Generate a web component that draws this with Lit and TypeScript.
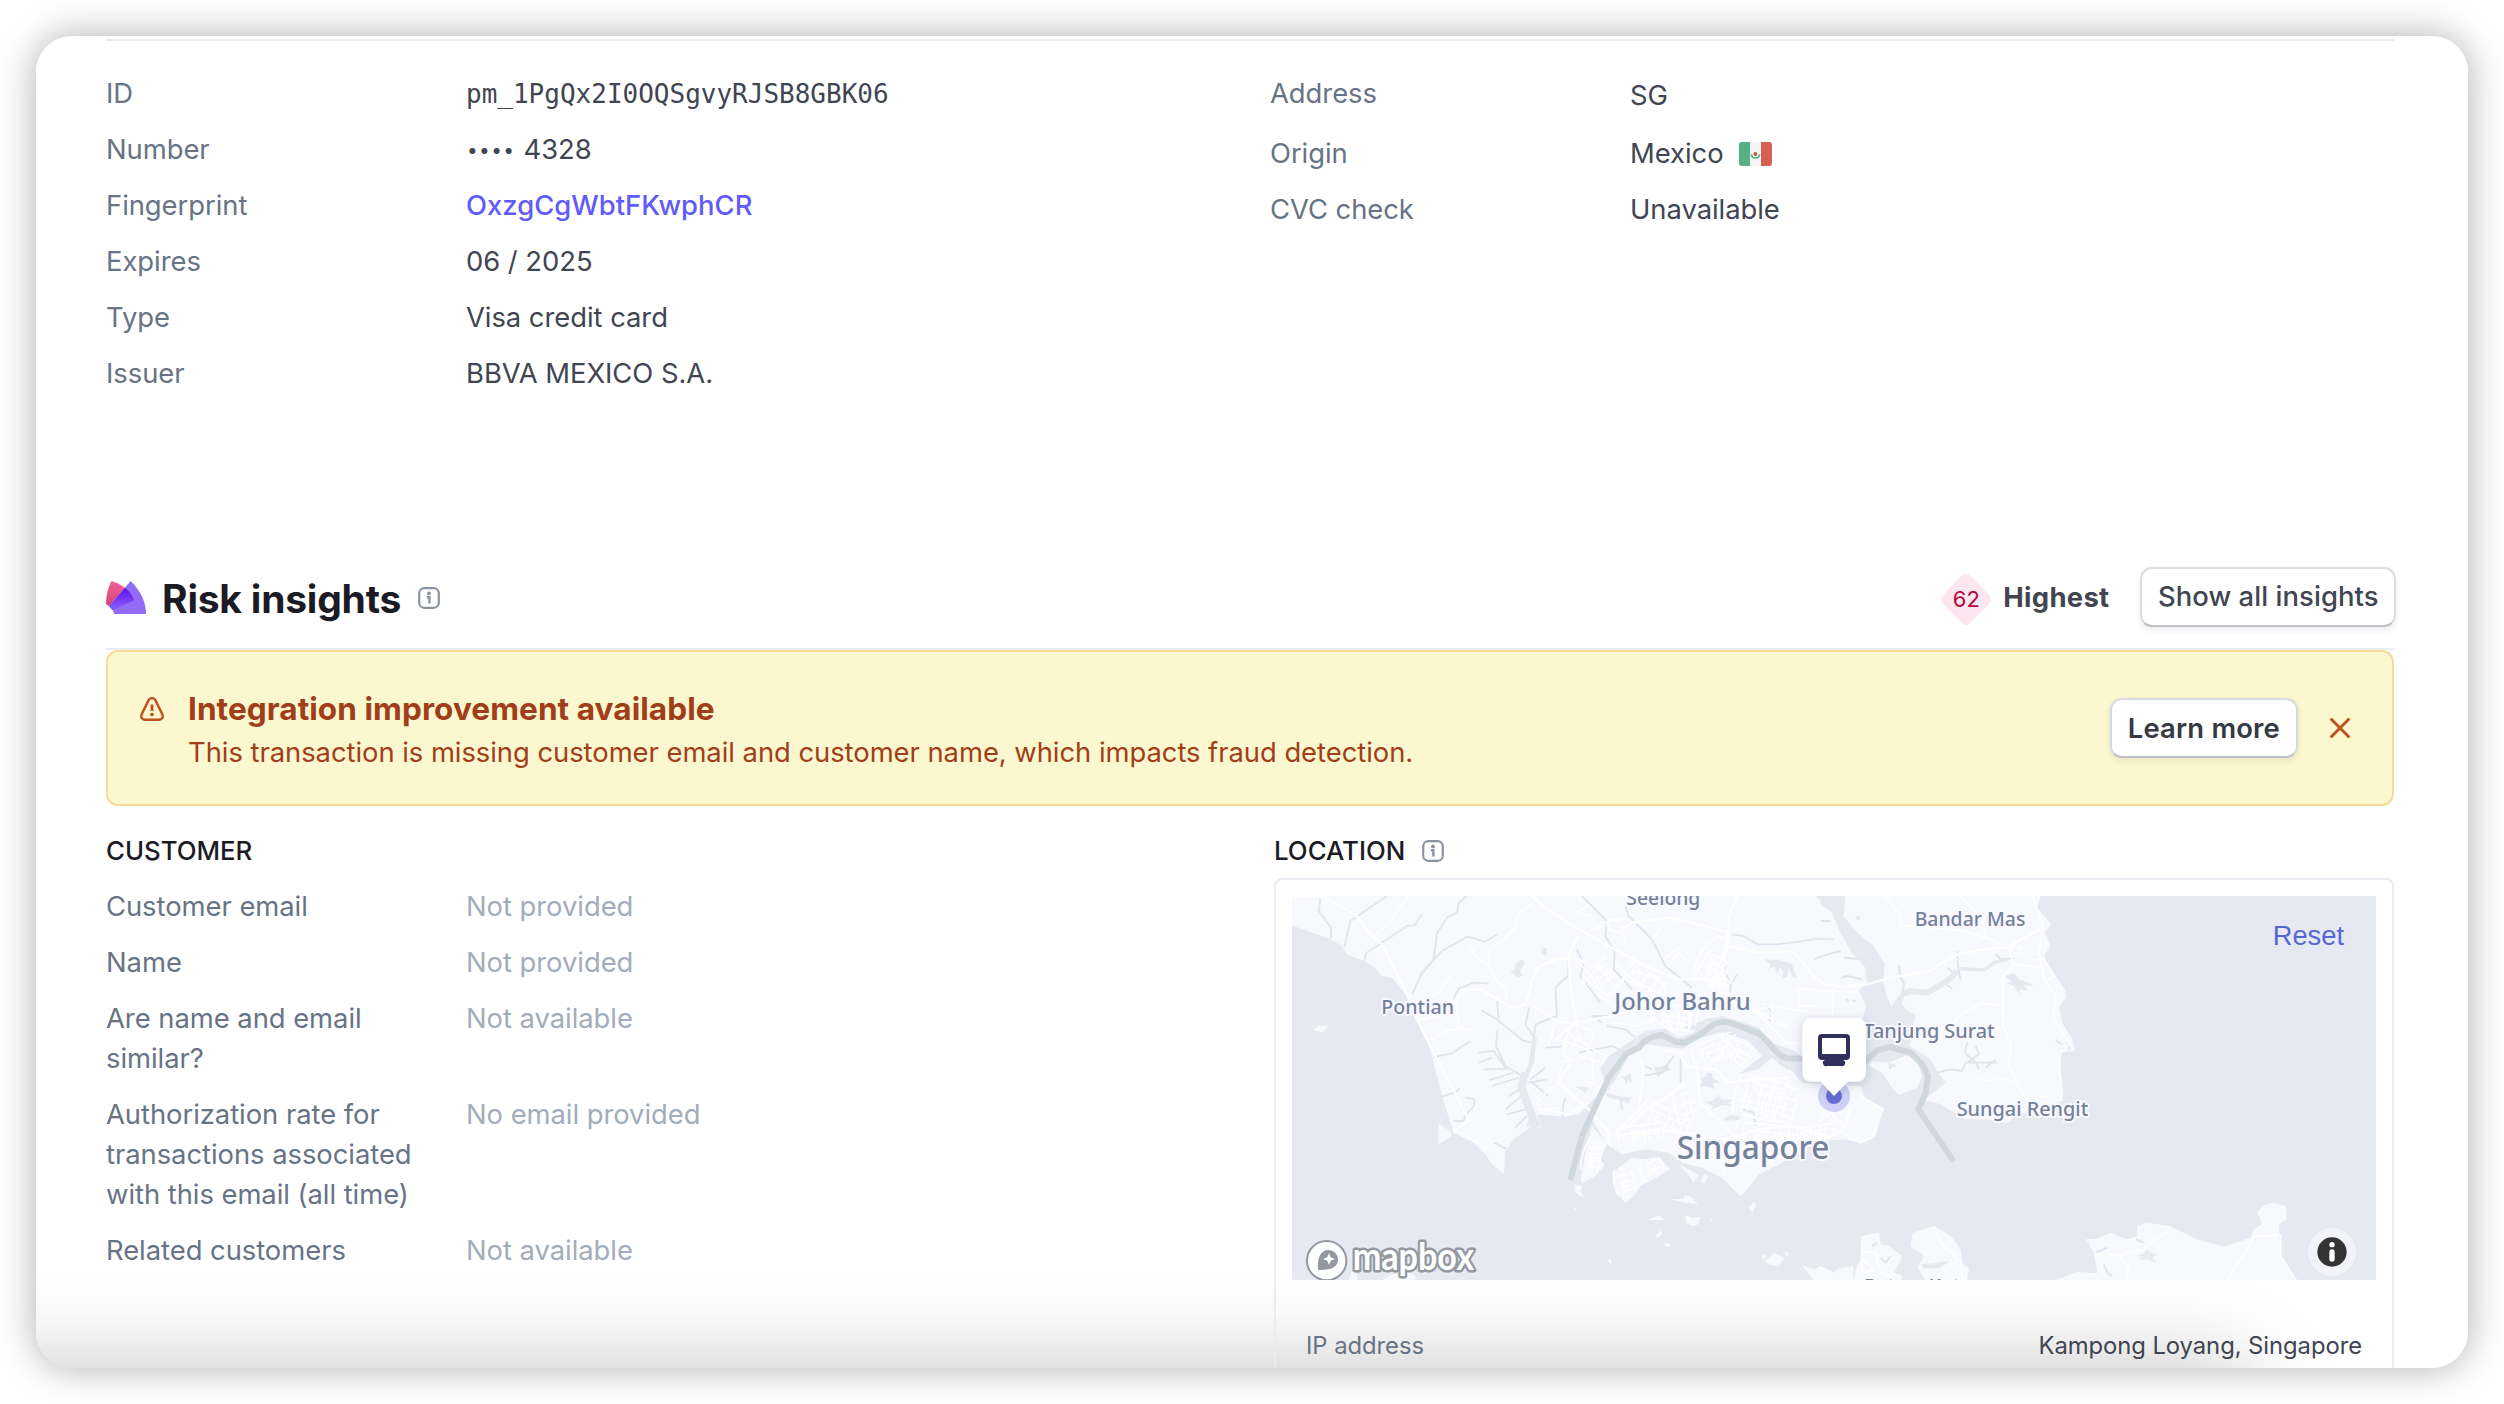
import { LitElement, html, svg, css } from "lit";
import { customElement, property } from "lit/decorators.js";

const infoIcon = html`<svg width="22" height="22" viewBox="0 0 22 22" fill="none">
  <rect x="1.2" y="1.2" width="19.6" height="19.6" rx="5" stroke="#8a93a3" stroke-width="2.2" />
  <circle cx="11" cy="6.4" r="1.9" fill="#8a93a3" />
  <path d="M8.8 10.2H11.4V16.6" stroke="#8a93a3" stroke-width="2.4" />
</svg>`;

const mexicoFlag = html`<svg class="flag" width="33" height="24" viewBox="0 0 33 24">
  <rect width="33" height="24" rx="3" fill="#f4f5f9" />
  <path d="M3 0H11V24H3A3 3 0 0 1 0 21V3A3 3 0 0 1 3 0Z" fill="#57b083" />
  <path d="M22 0H30A3 3 0 0 1 33 3V21A3 3 0 0 1 30 24H22Z" fill="#d66153" />
  <path d="M12.4 12.2Q12.6 16 16.5 16Q20.4 16 20.6 12.2" fill="none" stroke="#57b083" stroke-width="1.7" />
  <circle cx="16.4" cy="12" r="2" fill="#b5653c" />
</svg>`;

interface Row {
  label: string;
  value: unknown;
  kind?: string;
}

@customElement("detail-list")
export class DetailList extends LitElement {
  @property({ attribute: false }) rows: Row[] = [];

  static styles = css`
    :host { display: block; }
    .list { display: flex; flex-direction: column; gap: 16px; }
    .row { display: grid; grid-template-columns: 328px 1fr; column-gap: 32px; }
    .label { color: #687385; }
    .value { color: #414552; white-space: nowrap; }
    .muted { color: #a3acba; }
    .link { color: #625afa; font-weight: 500; letter-spacing: 0.02px; }
    .mono { font-family: "DejaVu Sans Mono", monospace; font-size: 26px; letter-spacing: 0; padding-top: 1px; margin-bottom: -1px; }
    .drop { padding-top: 2px; margin-bottom: 2px; }
    .flag { margin-left: 15px; vertical-align: -3px; }
    .dots { letter-spacing: 1.4px; font-size: 19px; line-height: 20px; vertical-align: 2px; margin: 0 0.5px 0 1px; }
  `;

  render() {
    return html`<div class="list">
      ${this.rows.map(
        (r) => html`<div class="row">
          <div class="label">${r.label}</div>
          <div class="value ${r.kind ?? ""}">${r.value}</div>
        </div>`
      )}
    </div>`;
  }
}

// Map geometry is expressed at three units per CSS pixel; EAST shapes start 1566 units in.
const LAND_WEST = [
  "M0 0L1590 0 1586 25 1620 50 1645 110 1680 170 1720 215 1725 260 1700 285 1722 330 1712 372 1720 500 1560 500 1500 462 1440 440 1400 395 1330 372 1290 360 1240 368 1200 412 1160 425 1120 398 1060 405 1010 440 950 480 925 520 940 560 915 600 860 655 820 663 735 655 748 693 735 697 715 640 705 690 715 695 665 730 640 765 636 835 600 805 580 775 545 740 485 710 450 600 430 520 415 460 370 370 345 300 300 245 270 240 250 215 215 195 165 175 150 150 115 130 60 110 0 88Z",
  "M1060 445L1010 480 965 560 935 600 915 640 900 670 940 740 990 775 1060 760 1130 770 1170 800 1230 815 1290 845 1345 900 1370 875 1400 835 1470 800 1530 750 1600 735 1660 730 1710 742 1750 722 1775 636 1720 605 1705 570 1530 560 1500 525 1440 485 1400 520 1340 535 1410 480 1370 435 1290 408 1220 428 1170 458Z",
  "M900 690L945 745 925 790 938 808 910 840 870 860 866 850 885 745Z",
  "M960 830L1020 785 1060 790 1100 782 1135 820 1085 850 1045 870 1025 900 1000 920 975 890Z",
  "M440 683L475 705 478 722 438 745Z",
  "M65 402L80 388 110 392 90 410Z",
  "M845 865L870 870 865 885 877 905 850 890Z",
  "M1160 805L1222 838 1205 860 1190 838Z M1235 835L1250 840 1235 862 1226 855Z",
  "M1135 910L1175 908 1180 898 1195 900 1218 925 1180 920Z",
  "M1068 972L1100 957 1115 972Z M1180 957L1200 965 1225 962 1220 985 1200 990 1182 980Z",
  "M1090 1020L1108 1003 1112 1012 1096 1026Z M1118 1040L1135 1045 1132 1055 1120 1050Z",
  "M1370 935L1385 915 1392 930 1380 950Z M945 1090L958 1092 957 1110Z M1255 968L1265 975 1256 976Z M842 934L856 940 850 942Z",
  "M1420 1095L1445 1070 1475 1085 1460 1112 1430 1105Z M1408 1075L1425 1080 1412 1092Z M1478 1065L1494 1075 1482 1080Z",
  "M170 1152L180 1125 196 1135 195 1152Z M270 1152L300 1135 350 1130 372 1140 368 1152Z",
];
const LAND_EAST = [
  "M95 0L88 60 130 110 180 150 212 205 208 260 218 300 232 332 262 290 270 305 262 325 300 360 300 400 285 450 320 470 350 490 375 535 395 560 330 612 380 625 450 668 540 672 580 680 620 655 745 615 745 560 735 470 783 465 775 430 745 380 735 330 757 305 755 285 700 200 690 180 710 150 692 110 712 85 670 35 680 0Z",
  "M225 500L270 480 300 478 325 540 310 575 255 597 230 570 205 530 165 510 175 495Z",
  "M140 1020L195 1010 200 1045 225 1050 265 1080 240 1130 265 1140 262 1152 118 1152 128 1110 140 1090Z",
  "M295 1012L330 1000 360 990 410 1020 440 1060 445 1100 465 1120 460 1152 335 1152 310 1115 330 1080 290 1050Z",
  "M-36 1108L0 1120 20 1110 60 1130 70 1118 118 1110 118 1152 0 1152Z",
  "M725 1152L790 1128 850 1132 840 1070 815 1030 850 1028 890 1010 935 1030 968 1022 970 990 1000 980 1065 990 1150 1030 1230 1052 1310 1025 1318 1000 1345 985 1330 950 1345 930 1375 920 1415 930 1418 970 1395 985 1400 1080 1450 1152Z",
];
const STREAMS_WEST = [
  "M85 10L80 45 117 95V128", "M285 0L175 75 157 152", "M390 55L368 88 345 90 222 172 217 195",
  "M525 0L500 20 495 50 465 65 435 112 425 190 385 240 360 296", "M615 115L580 137 525 122 450 165 385 235",
  "M590 262L545 260 500 278 485 308", "M568 343L615 370 690 432 718 440", "M425 483L480 472 535 435",
  "M448 602L490 590 502 577", "M520 604L548 610 545 630 520 660 515 675 485 675", "M605 740L642 758",
  "M615 315L620 368", "M617 400L612 450 640 510 690 540", "M558 470L605 465 640 515", "M560 500L600 485 M575 520L650 518 M592 552L665 530 M600 570L680 545",
  "M830 190L828 240 790 275 795 360 730 385 725 430", "M712 335L700 385 730 430 M760 455L810 452",
  "M855 160L875 205 865 240 925 320", "M870 0L945 75 940 120 968 165 965 220 1020 280",
  "M1000 30L1010 60 1080 130 1120 210 1200 275", "M1320 115L1355 120 1395 145 1460 145 1566 130",
  "M1295 190L1300 230 1318 265 1335 235 M1315 265V290", "M715 550L760 515 M710 560L765 550 M715 555L770 600 M700 570L650 600 M690 600L640 640 M700 640L645 655 M705 660L670 695",
  "M820 605L812 632V665", "M1050 540L1110 530 1145 480 M1060 510L1080 520 M1166 470V560 M985 610L990 640", "M1425 330L1440 350 1430 370 1445 380",
  "M1350 640L1385 650 1390 690 M1460 500L1490 520", "M945 390L1000 400 1030 425 M860 470L960 450 1000 470 M950 360L900 360 930 380",
];
const LAKES_WEST = [
  "M670 205L690 190 698 200 685 225 692 238 675 245 655 225 668 222Z", "M750 158L764 155 762 180 748 170Z",
  "M1415 190L1460 192 1500 205 1515 248 1500 240 1490 215 1488 240 1470 250 1474 225 1462 215 1455 235 1448 212 1430 218 1436 205Z",
  "M1225 545L1240 540 1245 530 1260 532 1262 545 1285 560 1262 562 1270 580 1250 572 1235 572 1218 570 1232 560Z",
  "M1235 620L1262 614 1280 598 1290 612 1325 610 1308 620 1320 630 1290 628 1260 640 1262 628Z", "M985 540L1000 542 1015 530 1020 560 1008 556 1000 568 998 552Z M940 590L980 600 1020 605 1010 622 985 612 950 605Z",
  "M1295 665L1320 658 1345 660 1340 672 1300 674Z M850 570L890 575 880 590Z M1170 395L1230 375 1240 392 1200 402Z", "M1085 510L1100 515 1125 505 1135 522 1110 530 1098 545Z",
];
const STREAMS_EAST = [
  "M0 128L60 130", "M0 190L40 175 80 165", "M20 75H50 M90 185L140 190", "M82 245L100 240 145 250",
  "M255 208L258 240 270 262 266 295", "M430 165L432 215 440 250", "M400 215L415 228 M395 265L415 278", "M545 175L562 190 600 187",
  "M370 530L410 520 445 525 455 500 550 500", "M460 440L452 470 485 500 495 520 M485 450L495 475 460 500 M515 515L545 490",
  "M725 432L745 447 M758 440L768 460", "M845 1070L880 1055 M870 1105L880 1130 895 1140", "M200 1085L215 1100 230 1080 M175 1050L190 1040", "M965 1030L990 1040",
];
const LAKES_EAST = [
  "M572 240L600 232 615 250 660 268 630 268 645 285 615 280 618 298 600 270 578 262 592 255Z",
  "M970 1080L990 1072 1000 1060 1010 1070 1030 1075 1015 1085 1028 1100 1000 1090 975 1092 985 1082Z", "M222 495L235 505 240 500 248 512 236 512 225 522Z",
  "M5 0L60 0 50 30 25 20Z M125 60H138V72H125Z M95 308H105V316H95Z M115 312H126V318H115Z", "M280 355L300 350 305 370 285 375Z", "M320 1105L370 1100 405 1095 380 1115 330 1118Z",
];
const ROADS_MAIN = [
  "M0 0L90 0 190 55 240 120 270 145 345 295 375 370 430 480 530 670 485 710", "M720 0L780 50 870 105 950 150 1060 210 1160 250 1260 250 1310 270",
  "M1310 270L1270 230 1310 150 1400 170 1500 165 1535 200 1566 245", "M860 110L830 180 835 270 855 380", "M380 372L410 365 440 360",
  "M485 345L495 305 520 282 570 280 600 300 660 335 700 325 722 250 735 215 790 190 850 185 880 200", "M945 75L950 100 980 110 1020 80 1130 65 1240 90 1310 110",
  "M945 75L990 70 M935 90L890 105 M1335 0L1312 60 1305 150", "M790 430L850 380 960 360 1060 330 1180 330 1290 290 1370 330 1440 370",
  "M820 430L815 480 840 490 800 560 900 650 960 720", "M970 720L1100 700 1200 715 1300 730 1400 700 1500 690 1600 720",
  "M1160 465L1180 510 1270 520 1310 560 1400 550 1490 545", "M1180 470L1120 465", "M1215 520L1225 620 1300 690 1340 740",
  "M1045 490L1055 530 1040 640 970 715", "M1180 560L1130 600 1060 640 1000 700",
];
const ROADS_MINOR = [
  "M350 0L290 80 240 125", "M720 20L680 55 665 100 630 135 595 155 590 200 610 250 640 275 645 305", "M530 140L550 180 590 210",
  "M400 310L440 290 475 240", "M495 345L500 395 548 405 M500 400L460 405 415 435", "M485 700L540 730 590 760",
  "M720 330L750 345 785 370 780 430 M790 375L850 385 870 440 940 480 930 500 860 480", "M900 480L905 560 880 560 M900 560L930 580",
  "M735 600L745 640 800 635 M745 640L830 655 890 620", "M800 560L760 590 735 625 M840 490L810 500 800 560",
  "M850 50L890 30 860 10 M900 60L850 50", "M860 200L900 240 940 180 M880 230L920 200 M890 260L950 300 1000 240 1030 230 M910 290L970 330 M970 200L1010 240 1060 290 M1000 140L985 90",
  "M1030 270L1080 230 1120 280 M1060 300L1100 240 M1080 130L1110 90 M1130 210L1160 170 1190 200 M1120 185L1170 150 M1200 240L1220 180 1250 140",
  "M1240 150L1280 120 1310 130 M1230 200L1300 280 M1215 215L1270 290 M1240 170L1290 220 M1300 150L1290 240 1330 270",
  "M1060 340L1100 380 1150 410 M1110 340L1140 400 M1150 330L1170 400 M1190 330V400 M1220 330L1210 390 M960 380L1040 390 1080 370",
  "M1370 330L1420 370 1480 440 1560 445 M1440 320V380L1490 390 M1380 345L1450 330 1500 340 1566 350 M1520 285V330H1566 M1400 350L1440 400 M1560 280H1510",
];
const ROADS_EAST = [
  "M0 240L30 265 90 272 160 265 230 245 350 225 400 190 440 172 530 157 580 155 685 95", "M655 0L690 95 675 165 690 250 725 300 718 360 765 445 740 470 735 530 745 590 740 610",
  "M210 0L255 50 262 88 350 95 450 105 530 130 580 152", "M435 0L490 50 513 95V125", "M580 150L600 205 565 245 568 390 590 445 585 510 612 570 640 610 700 600",
  "M595 150L620 155 618 175 595 170Z M600 205L675 215 M655 190H690L722 240 700 252", "M0 283L133 288 M60 275L55 360 M0 350H50", "M568 328L505 322 440 355 420 380", "M487 545L530 555 550 545 608 560",
  "M125 575L150 610 207 640 175 725 138 740 90 715", "M110 635L90 700 50 720 0 730 M0 600L60 660 95 700 M20 640L70 690 M0 690L60 640", "M360 992L380 1040 440 1095 446 1152 M355 1152L430 1095",
  "M145 1065L185 1070 200 1130 235 1140 M145 1065V1120L180 1152 M145 1090L180 1120 150 1130", "M840 1075L920 1078 940 1070 990 1060 1010 1040 1060 1005", "M915 1078L945 1115 935 1152", "M1240 1152L1265 1110 1300 1060 1320 1020 1400 1018V1080L1445 1150",
];

// Street webs of the built-up districts: [x, y, width, height, spacing, rotation in degrees]
const DISTRICTS: [number, number, number, number, number, number][] = [
  [1210, 425, 130, 70, 19, -22], [1310, 430, 75, 80, 18, 30], [1340, 550, 150, 120, 19, 12], [960, 690, 170, 50, 19, -8], [1050, 640, 150, 70, 24, 24],
  [1340, 690, 190, 60, 15, 6], [1160, 570, 50, 110, 20, -14], [1300, 765, 100, 50, 18, -18], [884, 735, 40, 95, 12, 12],
  [978, 815, 42, 80, 14, -14], [1055, 795, 55, 45, 18, -28], [1235, 175, 65, 100, 16, 28], [885, 210, 80, 60, 17, -32],
  [1095, 340, 100, 60, 20, 8], [1500, 690, 130, 34, 17, -8], [1440, 570, 80, 110, 22, 18], [790, 385, 120, 90, 34, 22], [1010, 220, 110, 70, 26, 24],
];
const district = ([x, y, w, h, step, angle]: (typeof DISTRICTS)[number]) => {
  let d = "";
  let k = 0;
  for (let i = 0; i <= w; i += step) {
    const trim = ((k * 37) % 5) * (h / 10);
    const a = x + i + (((k * 29) % 9) - 4);
    const bend = ((k++ * 17) % 11) - 5;
    d += `M${a} ${y + trim}Q${a + bend * 3} ${y + h / 2} ${a + bend} ${y + h - trim / 3}`;
  }
  for (let j = 0; j <= h; j += step) {
    const trim = ((k * 31) % 6) * (w / 14);
    const b = y + j + (((k * 23) % 9) - 4);
    const bend = ((k++ * 13) % 11) - 5;
    d += `M${x + trim} ${b}Q${x + w / 2} ${b + bend * 3} ${x + w - trim / 2} ${b + bend}`;
  }
  return svg`<path class="street" d=${d} transform=${`rotate(${angle} ${x + w / 2} ${y + h / 2})`} />`;
};

const PLACES: [string, number, number, number, number][] = [
  ["Seelong", 1003, 26, 222, 62], ["Pontian", 268, 354, 218, 62], ["Johor Bahru", 967, 342, 409, 73], ["Singapore", 1154, 790, 458, 99],
  ["Bandar Mas", 1868, 90, 332, 62], ["Tanjung Surat", 1714, 427, 394, 62], ["Sungai Rengit", 1994, 659, 395, 62], ["Batam Kota", 1716, 1190, 320, 62],
];

@customElement("location-map")
export class LocationMap extends LitElement {
  static styles = css`
    :host { display: block; position: relative; height: 384px; overflow: hidden; background: #e6e9f2; }
    .canvas { display: block; }
    .land { fill: #f8f9fe; }
    .lake { fill: #e6e9f2; }
    .stream { fill: none; stroke: #dfe4ed; stroke-width: 5.5; stroke-linejoin: round; }
    .river { fill: none; stroke: #e6e9f2; stroke-linejoin: round; }
    .main { fill: none; stroke: #fff; stroke-width: 7; stroke-linejoin: round; }
    .minor { fill: none; stroke: #fff; stroke-width: 4.5; stroke-linejoin: round; }
    .street { fill: none; stroke: #fff; stroke-width: 4.5; stroke-linejoin: round; }
    .border { fill: none; stroke: #d0d7df; stroke-width: 18; stroke-linecap: round; stroke-linejoin: round; }
    .place { font-family: "Noto Sans", sans-serif; font-weight: 500; fill: #74819a; stroke: #f8f9fe; stroke-width: 12; stroke-linejoin: round; paint-order: stroke; }
    .wordmark { font-family: Lato, sans-serif; font-weight: 700; fill: #fff; stroke: #94989f; stroke-width: 15; stroke-linejoin: round; paint-order: stroke; }
    .reset { position: absolute; top: 20px; right: 32px; font: 27.3px/40px "Liberation Sans", Arial, sans-serif; letter-spacing: 0; color: #5866d3; }
    .bubble { filter: drop-shadow(0 6px 18px rgba(60, 66, 87, 0.22)); }
  `;

  render() {
    const paths = (list: string[], cls: string) => list.map((d) => svg`<path class=${cls} d=${d} />`);
    return html`<svg class="canvas" width="1084" height="384" viewBox="0 0 3252 1152">
        ${paths(LAND_WEST, "land")}
        <g transform="translate(1566 0)">${paths(LAND_EAST, "land")}</g>
        ${paths(LAKES_WEST, "lake")}
        ${paths(STREAMS_WEST, "stream")}
        <path class="river" stroke-width="14" d="M728 425L718 500 700 545" />
        <path class="river" stroke-width="24" d="M700 530L688 570 712 640 735 695" />
        <g transform="translate(1566 0)">
          ${paths(LAKES_EAST, "lake")}
          ${paths(STREAMS_EAST, "stream")}
          <path class="river" stroke-width="18" d="M262 295L290 285 340 290 400 255 430 225" />
          <path class="river" stroke-width="11" d="M430 218L510 222 540 200 580 188" />
          ${paths(ROADS_EAST, "minor")}
          <path class="main" d=${ROADS_EAST[0]} />
        </g>
        ${DISTRICTS.map(district)}
        ${paths(ROADS_MINOR, "minor")}
        ${paths(ROADS_MAIN, "main")}
        <path class="border" d="M837 845L870 720 920 610 950 545 980 505 1000 475 1040 455Q1065 420 1110 417L1150 437 1180 440 1225 415 1265 385Q1290 372 1320 382L1400 412 1430 440Q1460 480 1485 487L1560 490 1690 512 1726 490 1756 463 1794 453 1856 470 1891 505 1908 540 1901 590 1879 640 1981 790" />
        ${PLACES.map(
          ([name, x, y, w, size]) =>
            svg`<text class="place" x=${x} y=${y} font-size=${size} textLength=${w} lengthAdjust="spacingAndGlyphs">${name}</text>`
        )}
        <circle cx="1626" cy="600" r="48" fill="#5b62dc" fill-opacity=".27" />
        <circle cx="1626" cy="600" r="24" fill="#696fd6" />
        <path class="bubble" fill="#fff" d="M1556 366H1697A25 25 0 0 1 1722 391V532A25 25 0 0 1 1697 557H1668L1626 600 1586 557H1556A25 25 0 0 1 1531 532V391A25 25 0 0 1 1556 366Z" />
        <path fill="#312f5c" fill-rule="evenodd" d="M1590 414H1662A12 12 0 0 1 1674 426V480A12 12 0 0 1 1662 492H1653A9 9 0 0 1 1647 510H1605A9 9 0 0 1 1599 492H1590A12 12 0 0 1 1578 480V426A12 12 0 0 1 1590 414ZM1590 426V474H1662V426Z" />
        <circle cx="104" cy="1094" r="59" fill="#fff" stroke="#94989f" stroke-width="6" />
        <path fill="#94989f" d="M78 1122C75 1085 86 1062 110 1062A28 28 0 0 1 138 1090C138 1112 118 1124 78 1122Z" />
        <path fill="#fff" d="M111 1071L116 1084 129 1089 116 1094 111 1107 106 1094 93 1089 106 1084Z" />
        <text class="wordmark" x="182" y="1121" font-size="112" textLength="364" lengthAdjust="spacingAndGlyphs">mapbox</text>
        <circle cx="3120" cy="1068" r="72" fill="#fff" fill-opacity=".5" />
        <circle cx="3120" cy="1068" r="44" fill="#333" />
        <circle cx="3120" cy="1046" r="8" fill="#fff" />
        <rect x="3112" y="1060" width="16" height="37" rx="8" fill="#fff" />
      </svg>
      <span class="reset">Reset</span>`;
  }
}

@customElement("app-root")
export class AppRoot extends LitElement {
  static styles = css`
    :host { display: block; width: 2504px; height: 1404px; background: #fff; overflow: hidden; box-sizing: border-box; padding: 36px;
      font: 400 27.4px/40px Inter, "Liberation Sans", sans-serif; letter-spacing: -0.04px; color: #414552; }
    .sheet { position: relative; box-sizing: border-box; width: 2432px; height: 1332px; border-radius: 36px; background: #fff;
      padding: 3px 74px 0 70px; overflow: hidden; }
    .frame { border-radius: 36px; box-shadow: 0 0 38px rgba(0, 0, 0, 0.32); width: 2432px; }
    .fade { position: absolute; left: -200px; top: 1332px; width: 2410px; height: 300px; box-shadow: 0 0 88px rgba(0, 0, 0, 0.24); }
    .content { position: relative; }
    .facts { display: grid; grid-template-columns: 1164px 1fr; border-top: 2px solid #ebebf2; padding-top: 32px; height: 320px; }
    .risk { display: flex; align-items: center; margin-top: 174px; height: 60px; padding-bottom: 21px; border-bottom: 2px solid #ebebf2; }
    .title { font-size: 39px; font-weight: 700; color: #1a1b25; margin: 3px 17px 0 16px; line-height: 48px; white-space: nowrap; letter-spacing: -0.22px; }
    .title-info { display: flex; margin-top: 1px; }
    .spacer { flex: 1; }
    .score { display: grid; place-items: center; width: 50px; height: 51px; margin-right: 12px; margin-top: 4px; }
    .score svg, .score span { grid-area: 1 / 1; }
    .score span { color: #b3063d; font-size: 22px; line-height: 28px; }
    .level { font-weight: 700; margin: 0 31px 0 0; letter-spacing: 0.3px; }
    .button { box-sizing: border-box; height: 60px; padding: 8px 16px; border: 2px solid #d5d9e0; border-bottom-color: #bcc1cb; border-radius: 12px; background: #fff; box-shadow: 0 3px 6px rgba(60, 66, 87, 0.09); white-space: nowrap; }
    .button.medium { font-weight: 500; margin-right: -2px; border-color: #dcdcde; border-bottom-color: #bfbfc3; letter-spacing: 0.08px; padding: 7px 15.5px 9px; }
    .button.strong { font-weight: 600; color: #353a44; letter-spacing: 0.2px; }
    .banner { display: flex; align-items: center; box-sizing: border-box; height: 156px; border: 2px solid #f7d998; border-radius: 12px; background: #fbf7ce; padding: 0 42px 0 32px; color: #a13e1a; }
    .warn { align-self: flex-start; margin-top: 45px; }
    .message { flex: 1; margin-left: 24px; margin-top: 5px; }
    .message-title { font-size: 31.6px; font-weight: 700; line-height: 42px; letter-spacing: 0.04px; }
    .message-text { line-height: 44px; }
    .close { margin-left: 32px; }
    .panels { display: grid; grid-template-columns: 1168px 1120px; margin-top: 29px; }
    .heading { display: flex; align-items: center; font-size: 25.8px; font-weight: 500; line-height: 32px; height: 32px; color: #1a1b25; gap: 17px; letter-spacing: 0; }
    .customer { margin-top: 19px; }
    .location { box-sizing: border-box; margin-top: 11px; padding: 16px; border: 2px solid #ebebf2; border-radius: 8px; height: 560px; }
    .ip { display: flex; justify-content: space-between; padding: 46px 14px 0; font-size: 23.8px; color: #687385; }
    .place { font-weight: 400; color: #414552; letter-spacing: -0.05px; }
  `;

  render() {
    return html`<div class="frame"><div class="sheet">
      <div class="fade"></div>
      <div class="content">
        <div class="facts">
          <detail-list .rows=${[
            { label: "ID", value: "pm_1PgQx2I0OQSgvyRJSB8GBK06", kind: "mono" },
            { label: "Number", value: html`<span class="dots">••••</span> 4328` },
            { label: "Fingerprint", value: "OxzgCgWbtFKwphCR", kind: "link" },
            { label: "Expires", value: "06 / 2025" },
            { label: "Type", value: "Visa credit card" },
            { label: "Issuer", value: "BBVA MEXICO S.A." },
          ]}></detail-list>
          <detail-list .rows=${[
            { label: "Address", value: "SG", kind: "drop" },
            { label: "Origin", value: html`Mexico${mexicoFlag}` },
            { label: "CVC check", value: "Unavailable" },
          ]}></detail-list>
        </div>
        <div class="risk">
          <svg width="40" height="33" viewBox="18 36 120 99">
            <defs>
              <linearGradient id="pink" x1="0" y1="0" x2="0" y2="1"><stop stop-color="#f2609a" /><stop offset="1" stop-color="#d14473" /></linearGradient>
              <linearGradient id="mix" x1="0" y1="0" x2="0" y2="1"><stop stop-color="#5f0ff0" /><stop offset="1" stop-color="#8c60fa" /></linearGradient>
            </defs>
            <path fill="url(#pink)" d="M34 36Q50 40 75 56L27 112 18 105Q18 70 34 36Z" />
            <path fill="#936bf9" d="M92 36Q138 82 138 135H43Q38 120 27 112Z" />
            <path fill="url(#mix)" d="M75 56Q94 70 103 93L37 124 27 112Z" />
          </svg>
          <div class="title">Risk insights</div>
          <div class="title-info">${infoIcon}</div>
          <div class="spacer"></div>
          <div class="score">
            <svg width="50" height="51" viewBox="0 0 50 51"><path fill="#fce6f0" d="M20.5 2Q25-2 29.5 2L48 21Q52 25.500 48 30L29.500 49Q25 53 20.500 49L2 30Q-2 25.500 2 21Z" /></svg>
            <span>62</span>
          </div>
          <div class="level">Highest</div>
          <div class="button medium">Show all insights</div>
        </div>
        <div class="banner">
          <svg class="warn" width="24" height="24" viewBox="0 0 24 24" fill="none" stroke="#c0501f">
            <path stroke-width="2.400" stroke-linejoin="round" d="M8.500 3.400C10 .4 14 .4 15.500 3.400L22.300 17.200C23.600 20 22 22.700 19 22.700H5C2 22.700 .4 20 1.700 17.200Z" />
            <path stroke-width="2.800" d="M12 7.500V14" />
            <circle cx="12" cy="17.500" r="1.800" fill="#c0501f" stroke="none" />
          </svg>
          <div class="message">
            <div class="message-title">Integration improvement available</div>
            <div class="message-text">This transaction is missing customer email and customer name, which impacts fraud detection.</div>
          </div>
          <div class="button strong">Learn more</div>
          <svg class="close" width="20" height="20" viewBox="0 0 20 20"><path d="M1.500 1.500L18.500 18.500M18.500 1.500L1.500 18.500" stroke="#c0501f" stroke-width="3" stroke-linecap="round" /></svg>
        </div>
        <div class="panels">
          <div>
            <div class="heading">CUSTOMER</div>
            <detail-list class="customer" .rows=${[
              { label: "Customer email", value: "Not provided", kind: "muted" },
              { label: "Name", value: "Not provided", kind: "muted" },
              { label: "Are name and email similar?", value: "Not available", kind: "muted" },
              { label: "Authorization rate for transactions associated with this email (all time)", value: "No email provided", kind: "muted" },
              { label: "Related customers", value: "Not available", kind: "muted" },
            ]}></detail-list>
          </div>
          <div>
            <div class="heading">LOCATION ${infoIcon}</div>
            <div class="location">
              <location-map></location-map>
              <div class="ip"><span>IP address</span><span class="place">Kampong Loyang, Singapore</span></div>
            </div>
          </div>
        </div>
      </div>
    </div></div>`;
  }
}
